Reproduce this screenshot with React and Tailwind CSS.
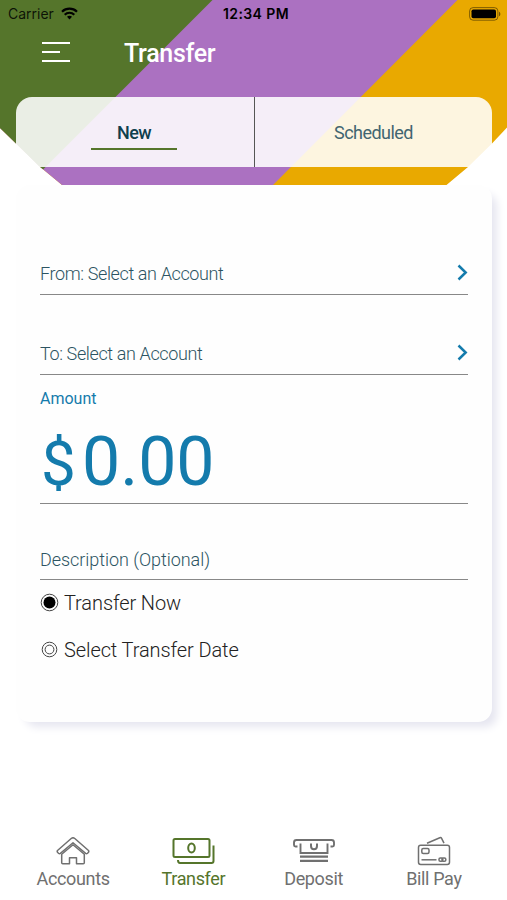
function HeaderBackground() {
  return (
    <svg className="absolute inset-0" width="507" height="185" viewBox="0 0 507 185">
      <clipPath id="header-shape">
        <polygon points="0,0 507,0 507,127.5 492,143.5 468,167 446.5,185 62,185 39,166 16,143.5 0,128" />
      </clipPath>
      <g clipPath="url(#header-shape)">
        <rect width="507" height="185" fill="#e9a900" />
        <polygon points="0,0 457.5,0 273,185 0,185" fill="#ab71c1" />
        <polygon points="0,0 212.5,0 27.5,185 0,185" fill="#55752b" />
      </g>
    </svg>
  )
}

function StatusBar() {
  return (
    <div className="grid grid-cols-3 items-center h-[27px] pl-2 pr-[6px] text-black font-[Inter,sans-serif]">
      <div className="flex items-center gap-[7px]">
        <span className="text-[14px] leading-none text-black/85">Carrier</span>
        <svg width="17" height="13" viewBox="0 0 17 13" fill="none" stroke="currentColor" strokeWidth="2.2">
          <path d="M1 4.7C5.2.7 11.8.7 16 4.7" />
          <path d="M3.7 7.7c2.7-2.6 6.9-2.6 9.6 0" />
          <path d="M6 9.8c1.4-1.3 3.6-1.3 5 0L8.5 12.4z" fill="currentColor" stroke="none" />
        </svg>
      </div>
      <span className="pl-[3px] text-[14px] leading-none font-semibold text-center tracking-[0.4px] whitespace-nowrap">12:34 PM</span>
      <svg className="justify-self-end" width="32" height="14" viewBox="0 0 32 14">
        <rect x="0.6" y="0.6" width="28.3" height="12.6" rx="3.5" fill="none" stroke="#000" strokeOpacity="0.45" />
        <rect x="2.5" y="2.5" width="24.5" height="8.8" rx="1.8" />
        <path d="M30 4.7c1.8.7 1.8 3.9 0 4.6z" fillOpacity="0.5" />
      </svg>
    </div>
  )
}

function Tabs() {
  return (
    <div className="flex h-[70px] mx-4 mr-[15px] rounded-t-[16px] bg-white/88 text-[18px] leading-[20px] tracking-[-0.55px]">
      <button className="w-[239px] flex flex-col items-center pt-[26px] pr-[2px] border-r border-[#555] font-medium text-[#0f3f4e]">
        <span>New</span>
        <span className="mt-[5px] h-[2px] w-[86px] bg-[#55752b]" />
      </button>
      <button className="flex-1 flex flex-col items-center pt-[26px] text-[#416571]">
        <span>Scheduled</span>
      </button>
    </div>
  )
}

function AccountRow({ label }) {
  return (
    <button className="flex w-full items-start justify-between h-[33px] border-b border-[#888] text-left text-[18px] leading-[22px] tracking-[-0.38px] font-light text-[#2c5462]">
      <span className="pt-px">{label}</span>
      <svg className="mt-[2px]" width="11" height="17" viewBox="0 0 11 17" fill="none" stroke="#147bac" strokeWidth="2.5">
        <path d="M1.5 1.5 8.7 8.5 1.5 15.5" />
      </svg>
    </button>
  )
}

function RadioRow({ label, checked }) {
  return (
    <label className="flex items-center gap-[5px] h-6 text-[20px] leading-6 tracking-[-0.1px] font-light text-[#222]">
      <svg width="19" height="20" viewBox="0 0 19 20" fill="none" stroke="#444">
        {checked ? (
          <>
            <circle cx="9.5" cy="9.5" r="8.3" />
            <circle cx="9.5" cy="9.5" r="6" fill="#000" stroke="none" />
          </>
        ) : (
          <>
            <circle cx="9.5" cy="9.5" r="7.3" />
            <circle cx="9.5" cy="9.5" r="4.4" />
          </>
        )}
      </svg>
      {label}
    </label>
  )
}

function HouseIcon() {
  return (
    <svg width="34" height="28" viewBox="0 0 34 28" fill="none" stroke="currentColor" strokeWidth="1.5" strokeLinejoin="round">
      <path d="M1.5 13.5 15.5 1.3q1.5-1.1 3 0L32.5 13.5q.7 1-.2 2l-1 .9q-.8.6-1.7 0L17 5.8 4.4 16.4q-.9.6-1.7 0l-1-.9q-.9-1-.2-2z" />
      <path d="m5.7 17.3 11.3-9.5 11.3 9.5v8.4q0 1-1 1h-6.8v-6h-7v6H6.7q-1 0-1-1z" />
    </svg>
  )
}

function CashIcon() {
  return (
    <svg width="44" height="28" viewBox="0 0 44 28" fill="none" stroke="currentColor" strokeWidth="2" strokeLinejoin="round">
      <rect x="2.5" y="2" width="36" height="18" rx="1.5" />
      <ellipse cx="20.5" cy="11" rx="3.3" ry="4.5" />
      <path d="M42.5 8.5v15.5q0 2-2 2H9q-2 0-2-3" />
    </svg>
  )
}

function DepositIcon() {
  return (
    <svg width="44" height="26" viewBox="0 0 44 26" fill="none" stroke="currentColor" strokeWidth="2">
      <path d="M5.5 8.5H3.5q-1.5 0-1.5-1.5V4.5q0-2.5 2.5-2.5h35q2.5 0 2.5 2.5V7q0 1.5-1.5 1.5h-2" strokeWidth="1.9" />
      <path d="M8.5 5.5v9.5h27V5.5" strokeWidth="1.9" />
      <path d="M19 5.5v2.5q0 3.2 3 3.2t3-3.2v-2.5" />
      <path d="M8 18.7h28M8 22.9h28" strokeWidth="2.2" />
    </svg>
  )
}

function CardIcon() {
  return (
    <svg width="34" height="30" viewBox="0 0 34 30" fill="none" stroke="currentColor" strokeWidth="1.5" strokeLinejoin="round">
      <rect x="1.5" y="9.3" width="31" height="19.2" rx="2.2" />
      <path d="M10 7.2 22.8 1.7q1.2-.5 1.8.6L27 7.2" />
      <rect x="4.8" y="12.5" width="7.2" height="5" rx="1.5" />
      <path d="M4.5 23.8h15" />
      <rect x="22" y="22" width="3.8" height="3.3" rx="1.3" />
      <rect x="25" y="22" width="3.8" height="3.3" rx="1.3" />
    </svg>
  )
}

const navItems = [
  { label: 'Accounts', Icon: HouseIcon },
  { label: 'Transfer', Icon: CashIcon, active: true },
  { label: 'Deposit', Icon: DepositIcon },
  { label: 'Bill Pay', Icon: CardIcon },
]

export default function App() {
  return (
    <div className="relative flex flex-col w-[507px] h-[900px] overflow-hidden bg-white font-[Roboto,sans-serif]">
      <header className="relative h-[185px] shrink-0">
        <HeaderBackground />
        <div className="relative">
          <StatusBar />
          <div className="flex items-start h-[70px] pl-[42px] text-white">
            <svg className="mt-[14px]" width="28" height="22" viewBox="0 0 28 22" stroke="currentColor" strokeWidth="2">
              <path d="M0 2h28M0 11h18M0 20h28" />
            </svg>
            <h1 className="ml-[54px] mt-3 text-[25px] leading-[30px] tracking-[-0.3px] font-medium">Transfer</h1>
          </div>
          <Tabs />
        </div>
      </header>

      <main className="ml-4 mr-[15px] h-[537px] shrink-0 rounded-[14px] bg-[#fefefe] px-6 pt-[77px] shadow-[7px_7px_8px_-2px_#e6e6f0]">
        <AccountRow label="From: Select an Account" />
        <div className="mt-[47px]">
          <AccountRow label="To: Select an Account" />
        </div>
        <div className="mt-[13px] h-[116px] border-b border-[#888] text-[#147bac]">
          <div className="text-[16px] leading-[22px]">Amount</div>
          <div className="flex items-baseline mt-[17px] text-[68px] leading-[70px]">
            <span className="w-[42px] pl-px text-[62px]">$</span>
            <span>0.00</span>
          </div>
        </div>
        <div className="mt-[45px] h-[31px] border-b border-[#888] text-[18px] leading-[22px] tracking-[-0.05px] font-light text-[#2c5462]">
          Description (Optional)
        </div>
        <div className="mt-[11px] flex flex-col gap-[23px]">
          <RadioRow label="Transfer Now" checked />
          <RadioRow label="Select Transfer Date" />
        </div>
      </main>

      <nav className="mt-auto grid grid-cols-4 px-[13px] h-[67px]">
        {navItems.map(({ label, Icon, active }) => (
          <button key={label}
            className={`flex flex-col items-center text-[18px] leading-[22px] tracking-[-0.35px] ${
              active ? 'text-[#55752b]' : 'text-[#707070]'
            }`}>
            <span className="flex h-[35px] items-center">
              <Icon />
            </span>
            {label}
          </button>
        ))}
      </nav>
    </div>
  )
}
